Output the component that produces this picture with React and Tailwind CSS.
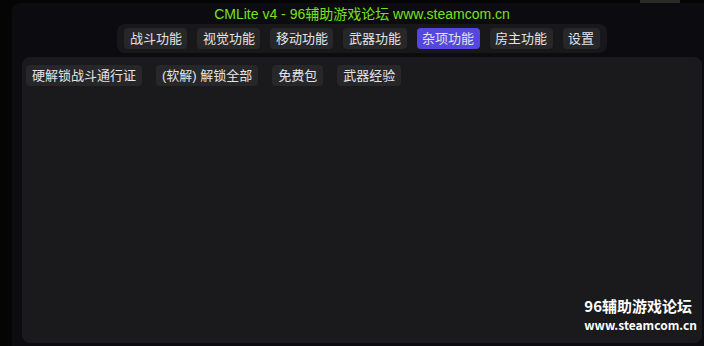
import React from "react";

const tabs = ["战斗功能", "视觉功能", "移动功能", "武器功能", "杂项功能", "房主功能", "设置"];
const items = ["硬解锁战斗通行证", "(软解) 解锁全部", "免费包", "武器经验"];

export default function App() {
  return (
    <div
      className="w-[704px] h-[346px] overflow-hidden bg-[#050505] relative"
      style={{ fontFamily: '"Liberation Sans", "Noto Sans CJK SC", sans-serif' }}
    >
      <div className="absolute left-[640px] top-0 w-[40px] h-[3px] bg-[#2a2a27]" />
      <div className="ml-[12px] mt-[3px] w-[700px] h-[343px] bg-[#0c0c10] rounded-tl-[8px] flex flex-col px-[10px]">
        <div className="h-[19px] flex items-end justify-center text-[14px] leading-[16px] text-[#78e01c]">
          CMLite v4 - 96辅助游戏论坛 www.steamcom.cn
        </div>
        <div className="mt-[2px] flex justify-center">
          <div className="flex gap-[10px] bg-[#18181b] rounded-[8px] px-[7px] pt-[4px] pb-[4px] h-[29px]">
            {tabs.map((t) => (
              <div
                key={t}
                className={
                  "h-[21px] px-[5.5px] rounded-[4px] text-[13px] leading-[21px] text-[#e4e4e4] " +
                  (t === "杂项功能" ? "bg-[#5447e0]" : "bg-[#27272a]")
                }
              >
                {t}
              </div>
            ))}
          </div>
        </div>
        <div className="mt-[4px] flex-1 mb-[3px] bg-[#1a1a1d] rounded-[8px] relative px-[4px] pt-[8px]">
          <div className="flex gap-[14px]">
            {items.map((t) => (
              <div
                key={t}
                className="h-[21px] px-[6px] rounded-[4px] bg-[#27272a] text-[13px] leading-[21px] text-[#e4e4e4]"
              >
                {t}
              </div>
            ))}
          </div>
          <div
            className="absolute right-[5px] bottom-[10px] flex flex-col items-end text-white font-bold"
            style={{ fontFamily: '"Noto Sans CJK SC", sans-serif' }}
          >
            <div className="text-[15px] leading-[20px] pr-[5px]">96辅助游戏论坛</div>
            <div className="text-[12px] leading-[17px]">www.steamcom.cn</div>
          </div>
        </div>
      </div>
    </div>
  );
}
